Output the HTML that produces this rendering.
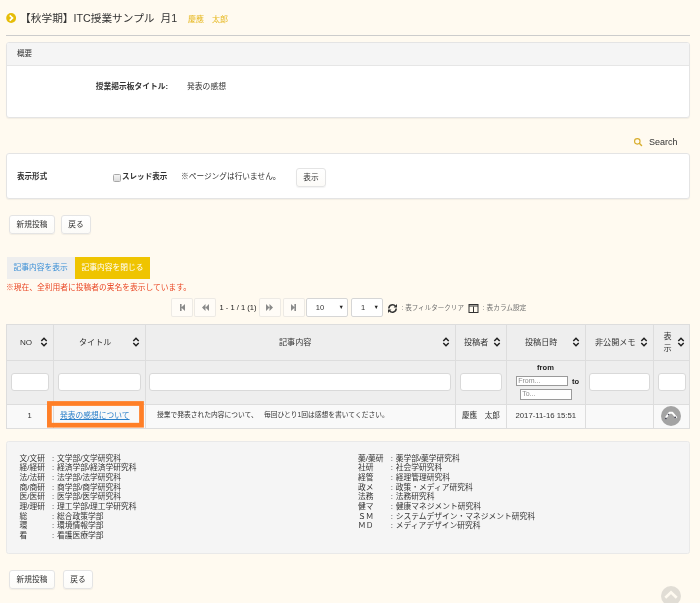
<!DOCTYPE html>
<html lang="ja">
<head>
<meta charset="utf-8">
<title>ITC授業サンプル</title>
<style>
*{box-sizing:border-box;margin:0;padding:0}
html,body{width:700px;height:603px;overflow:hidden}
body{background:#fffaf0;font-family:"Liberation Sans","Noto Sans CJK JP",sans-serif;font-size:7.55px;color:#333;position:relative}
.abs{position:absolute;white-space:nowrap}
.panel{position:absolute;left:6px;width:684px;background:#fff;border:1px solid #e4e4e4;border-radius:3px;box-shadow:0 1px 1px rgba(0,0,0,.05);overflow:hidden}
.btn{position:absolute;height:19px;background:linear-gradient(#fff,#fcfbf8);border:1px solid #e4e4e4;border-radius:3px;box-shadow:0 1px 1px rgba(0,0,0,.05);font-size:7.700px;color:#333;text-align:center;line-height:17px;white-space:nowrap}
.b{font-weight:bold}
.pbtn{position:absolute;top:298.300px;width:21px;height:19px;background:rgba(255,255,255,.45);border:1px solid rgba(0,0,0,.07);border-radius:2px}
.sel{position:absolute;top:298.300px;height:19px;background:#fff;border:1px solid #d6d6d6;border-radius:2px;font-size:7.55px;line-height:17px}
.pbtn svg{display:block;margin-left:.5px}
.inp{position:absolute;background:#fff;border:1px solid #d9d9d9;border-radius:3px;height:18px}
.leg{position:absolute;font-size:7.750px;line-height:9.625px;white-space:pre;color:#333}
</style>
</head>
<body>
<div id="wrap" style="position:absolute;left:0;top:0;width:700px;height:603px;will-change:transform">

<!-- title -->
<svg class="abs" style="left:6px;top:13px" width="10.300" height="10" viewBox="0 0 10.300 10"><circle cx="5.150" cy="4.950" r="4.950" fill="#e6bd08"/><path d="M3.700 2.300 L6.500 4.950 L3.700 7.600" fill="none" stroke="#fff" stroke-width="1.700"/></svg>
<div class="abs" style="left:20.100px;top:10.400px;font-size:10.700px;line-height:16px;color:#333">【秋学期】ITC授業サンプル&nbsp; 月1</div>
<div class="abs" style="left:188px;top:13.500px;font-size:8px;line-height:12px;color:#e6b820">慶應　太郎</div>
<div class="abs" style="left:6px;top:35px;width:684px;height:1px;background:#ccc"></div>

<!-- panel 1 -->
<div class="panel" style="top:42px;height:76px">
  <div style="height:22.500px;background:#f5f5f5;border-bottom:1px solid #e6e6e6"></div>
</div>
<div class="abs" style="left:17px;top:48px;line-height:12px;">概要</div>
<div class="abs b" style="left:60px;width:108px;text-align:right;top:81.300px;line-height:12px;font-size:7.750px">授業掲示板タイトル:</div>
<div class="abs" style="left:187px;top:81.300px;line-height:12px;font-size:7.800px">発表の感想</div>

<!-- search -->
<svg class="abs" style="left:633px;top:137px" width="10" height="10" viewBox="0 0 10 10"><circle cx="4.300" cy="4.300" r="2.750" fill="none" stroke="#d8ad2c" stroke-width="1.150"/><path d="M6.500 6.500 L8.500 8.500" stroke="#d8ad2c" stroke-width="1.500" stroke-linecap="round"/></svg>
<div class="abs" style="left:649px;top:136px;font-size:9px;line-height:12px;color:#333">Search</div>

<!-- panel 2 -->
<div class="panel" style="top:153px;height:46px"></div>
<div class="abs b" style="left:17px;top:171px;line-height:12px">表示形式</div>
<div class="abs" style="left:113px;top:174px;width:8px;height:8px;border:1px solid #a8a8a8;background:linear-gradient(#f4f4f4,#dcdcdc);border-radius:1.500px"></div>
<div class="abs b" style="left:122px;top:171px;line-height:12px">スレッド表示</div>
<div class="abs" style="left:181px;top:171px;line-height:12px;font-size:7.700px">※ページングは行いません。</div>
<div class="btn" style="left:296px;top:168px;width:30px">表示</div>

<!-- buttons -->
<div class="btn" style="left:9px;top:215px;width:46px">新規投稿</div>
<div class="btn" style="left:61px;top:215px;width:30px">戻る</div>

<!-- tabs -->
<div class="abs" style="left:6.500px;top:257px;width:68.500px;height:21.500px;background:#eeeeee;color:#3a8fd6;text-align:center;line-height:21.500px;font-size:7.750px">記事内容を表示</div>
<div class="abs" style="left:75px;top:257px;width:75px;height:21.500px;background:#efc400;color:#fff;text-align:center;line-height:21.500px;font-size:7.750px">記事内容を閉じる</div>
<div class="abs" style="left:6px;top:282px;line-height:12px;color:#ea4826;font-size:7.750px">※現在、全利用者に投稿者の実名を表示しています。</div>

<!-- pager -->
<div class="pbtn" style="left:171px;width:22px"><svg width="19" height="17" viewBox="0 0 19 17"><path d="M7 5h1.600v7H7zM12 5v7L8.300 8.500z" fill="#8a8a8a"/></svg></div>
<div class="pbtn" style="left:194px;width:22px"><svg width="19" height="17" viewBox="0 0 19 17"><path d="M9.500 5v7L6 8.500zM13 5v7L9.500 8.500z" fill="#8a8a8a"/></svg></div>
<div class="abs" style="left:219.5px;top:302px;line-height:12px;font-size:7.55px;color:#222">1 - 1 / 1 (1)</div>
<div class="pbtn" style="left:258.500px;width:22px"><svg width="19" height="17" viewBox="0 0 19 17"><path d="M6 5v7l3.500-3.500zM9.500 5v7L13 8.500z" fill="#8a8a8a"/></svg></div>
<div class="pbtn" style="left:282.500px;width:22px"><svg width="19" height="17" viewBox="0 0 19 17"><path d="M10.400 5h1.600v7h-1.600zM7 5v7l3.700-3.500z" fill="#8a8a8a"/></svg></div>
<div class="sel" style="left:306px;width:41.500px"><span style="position:absolute;left:8.700px">10</span><span style="position:absolute;right:2.500px;font-size:5.500px;color:#222">▼</span></div>
<div class="sel" style="left:350.5px;width:32px"><span style="position:absolute;left:9.500px">1</span><span style="position:absolute;right:2.500px;font-size:5.500px;color:#222">▼</span></div>
<svg class="abs" style="left:386.700px;top:302.500px" width="11" height="11" viewBox="0 0 11 11"><path d="M9.200 5.500a3.700 3.700 0 0 1-6.700 2.100M1.800 5.500a3.700 3.700 0 0 1 6.700-2.100" fill="none" stroke="#333" stroke-width="1.500"/><path d="M10 1v3.400H6.600z" fill="#333"/><path d="M1 10V6.600h3.400z" fill="#333"/></svg>
<div class="abs" style="left:401.500px;top:302px;line-height:12px;font-size:6.550px;color:#707070">: 表フィルタークリア</div>
<svg class="abs" style="left:468px;top:302.500px" width="11" height="11" viewBox="0 0 11 11"><rect x="1" y="1.500" width="9" height="8" fill="none" stroke="#333" stroke-width="1"/><path d="M1 3h9" stroke="#333" stroke-width="1"/><path d="M5.500 3.500v6" stroke="#333" stroke-width="1"/></svg>
<div class="abs" style="left:482.800px;top:302px;line-height:12px;font-size:6.700px;color:#707070">: 表カラム設定</div>

<!-- table -->
<div class="abs" style="left:6px;top:324px;width:684px;height:105px;background:#f9f9f9;border:1px solid #ddd"></div>
<div class="abs" style="left:7px;top:325px;width:682px;height:79px;background:#eeeeee"></div>
<div class="abs" style="left:6px;top:360px;width:684px;height:1px;background:#ddd"></div>
<div class="abs" style="left:6px;top:404px;width:684px;height:1px;background:#ddd"></div>
<!-- column separators -->
<div class="abs" style="left:53px;top:324px;width:1px;height:104px;background:#ddd"></div>
<div class="abs" style="left:145px;top:324px;width:1px;height:104px;background:#ddd"></div>
<div class="abs" style="left:455px;top:324px;width:1px;height:104px;background:#ddd"></div>
<div class="abs" style="left:506px;top:324px;width:1px;height:104px;background:#ddd"></div>
<div class="abs" style="left:585px;top:324px;width:1px;height:104px;background:#ddd"></div>
<div class="abs" style="left:653px;top:324px;width:1px;height:104px;background:#ddd"></div>

<!-- header labels -->
<div class="abs" style="left:20px;top:337px;line-height:12px;font-size:8.100px">NO</div><svg class="abs" style="left:39.5px;top:337.300px" width="8" height="10" viewBox="0 0 8 10"><path d="M1.300 4L4 1.300L6.700 4M1.300 6L4 8.700L6.700 6" fill="none" stroke="#1c1c1c" stroke-width="1.450"/></svg>
<div class="abs" style="left:79px;top:337px;line-height:12px;font-size:8.100px">タイトル</div><svg class="abs" style="left:131.5px;top:337.300px" width="8" height="10" viewBox="0 0 8 10"><path d="M1.300 4L4 1.300L6.700 4M1.300 6L4 8.700L6.700 6" fill="none" stroke="#1c1c1c" stroke-width="1.450"/></svg>
<div class="abs" style="left:279px;top:337px;line-height:12px;font-size:8.100px">記事内容</div><svg class="abs" style="left:441.5px;top:337.300px" width="8" height="10" viewBox="0 0 8 10"><path d="M1.300 4L4 1.300L6.700 4M1.300 6L4 8.700L6.700 6" fill="none" stroke="#1c1c1c" stroke-width="1.450"/></svg>
<div class="abs" style="left:464px;top:337px;line-height:12px;font-size:8.100px">投稿者</div><svg class="abs" style="left:492.5px;top:337.300px" width="8" height="10" viewBox="0 0 8 10"><path d="M1.300 4L4 1.300L6.700 4M1.300 6L4 8.700L6.700 6" fill="none" stroke="#1c1c1c" stroke-width="1.450"/></svg>
<div class="abs" style="left:525px;top:337px;line-height:12px;font-size:8.100px">投稿日時</div><svg class="abs" style="left:571.5px;top:337.300px" width="8" height="10" viewBox="0 0 8 10"><path d="M1.300 4L4 1.300L6.700 4M1.300 6L4 8.700L6.700 6" fill="none" stroke="#1c1c1c" stroke-width="1.450"/></svg>
<div class="abs" style="left:595px;top:337px;line-height:12px;font-size:8.100px">非公開メモ</div><svg class="abs" style="left:639.5px;top:337.300px" width="8" height="10" viewBox="0 0 8 10"><path d="M1.300 4L4 1.300L6.700 4M1.300 6L4 8.700L6.700 6" fill="none" stroke="#1c1c1c" stroke-width="1.450"/></svg>
<div class="abs" style="left:663.5px;top:331.200px;line-height:11.900px;width:9px;white-space:normal;font-size:8.100px">表示</div><svg class="abs" style="left:676.5px;top:337.300px" width="8" height="10" viewBox="0 0 8 10"><path d="M1.300 4L4 1.300L6.700 4M1.300 6L4 8.700L6.700 6" fill="none" stroke="#1c1c1c" stroke-width="1.450"/></svg>

<!-- filter inputs -->
<div class="inp" style="left:11px;top:373px;width:38px"></div>
<div class="inp" style="left:58px;top:373px;width:83px"></div>
<div class="inp" style="left:149px;top:373px;width:302px"></div>
<div class="inp" style="left:460px;top:373px;width:42px"></div>
<div class="inp" style="left:589px;top:373px;width:61px"></div>
<div class="inp" style="left:658px;top:373px;width:28px"></div>
<div class="abs b" style="left:506px;width:79px;text-align:center;top:362px;line-height:11px;font-size:7.55px;color:#222">from</div>
<div class="abs" style="left:516px;top:376px;width:52px;height:10px;border:1px solid #9a9a9a;background:#fff;font-size:7px;line-height:8px;color:#8c8c8c;padding-left:1.200px">From...</div>
<div class="abs b" style="left:572px;top:375.800px;line-height:12px;font-size:7.55px;color:#222">to</div>
<div class="abs" style="left:520px;top:389.400px;width:52px;height:10.600px;border:1px solid #9a9a9a;background:#fff;font-size:7px;line-height:8px;color:#8c8c8c;padding-left:1.200px">To...</div>

<!-- data row -->
<div class="abs" style="left:6px;width:47px;text-align:center;top:410px;line-height:12px">1</div>
<div class="abs" style="left:60px;top:410px;line-height:12px;font-size:7.750px;color:#2a7fc9;text-decoration:underline">発表の感想について</div>
<div class="abs" style="left:157px;top:409px;line-height:12px;font-size:6.750px">授業で発表された内容について、<span style="margin-left:6.300px">毎回ひとり1回は感想を書いてください。</span></div>
<div class="abs" style="left:462px;top:410px;line-height:12px">慶應　太郎</div>
<div class="abs" style="left:515.5px;top:410px;line-height:12px;font-size:7.750px">2017-11-16 15:51</div>
<svg class="abs" style="left:661px;top:406.100px" width="20" height="20" viewBox="0 0 20 20"><circle cx="10" cy="10" r="10" fill="#a3a3a3"/><path d="M4.600 12L8.400 6.800L11.400 6.800L15.600 11.800" fill="none" stroke="#fff" stroke-width="1.900" stroke-linejoin="round"/><circle cx="7.500" cy="8.600" r="0.800" fill="#445"/><circle cx="4.900" cy="12.400" r="0.800" fill="#334"/><circle cx="14.200" cy="11.400" r="0.800" fill="#334"/></svg>
<!-- orange highlight -->
<svg class="abs" style="left:46px;top:400px" width="100" height="29" viewBox="0 0 100 29"><rect x="3.400" y="3.500" width="92.100" height="21.700" fill="none" stroke="#ff7f27" stroke-width="4.750"/></svg>

<!-- legend -->
<div class="abs" style="left:6px;top:441px;width:684px;height:113px;background:#f5f5f5;border:1px solid #e9e9e9;border-radius:2.500px"></div>
<div class="leg" style="left:19.500px;top:453.800px">文/文研
経/経研
法/法研
商/商研
医/医研
理/理研
総
環
看</div>
<div class="leg" style="left:52.100px;top:453.800px;word-spacing:.5px">: 文学部/文学研究科
: 経済学部/経済学研究科
: 法学部/法学研究科
: 商学部/商学研究科
: 医学部/医学研究科
: 理工学部/理工学研究科
: 総合政策学部
: 環境情報学部
: 看護医療学部</div>
<div class="leg" style="left:358px;top:453.800px">薬/薬研
社研
経管
政メ
法務
健マ
ＳＭ
ＭＤ</div>
<div class="leg" style="left:390.800px;top:453.800px;word-spacing:.6px">: 薬学部/薬学研究科
: 社会学研究科
: 経理管理研究科
: 政策・メディア研究科
: 法務研究科
: 健康マネジメント研究科
: システムデザイン・マネジメント研究科
: メディアデザイン研究科</div>

<!-- bottom buttons -->
<div class="btn" style="left:9px;top:570.300px;width:46px">新規投稿</div>
<div class="btn" style="left:63px;top:570.300px;width:30px">戻る</div>

<!-- scroll top -->
<svg class="abs" style="left:661px;top:586px" width="20" height="20" viewBox="0 0 20 20"><circle cx="10" cy="10" r="10" fill="#e1ddd5"/><path d="M4.300 11.800L10 6.200l5.700 5.600" fill="none" stroke="#fffaf0" stroke-width="2.600"/></svg>

</div>
</body>
</html>
